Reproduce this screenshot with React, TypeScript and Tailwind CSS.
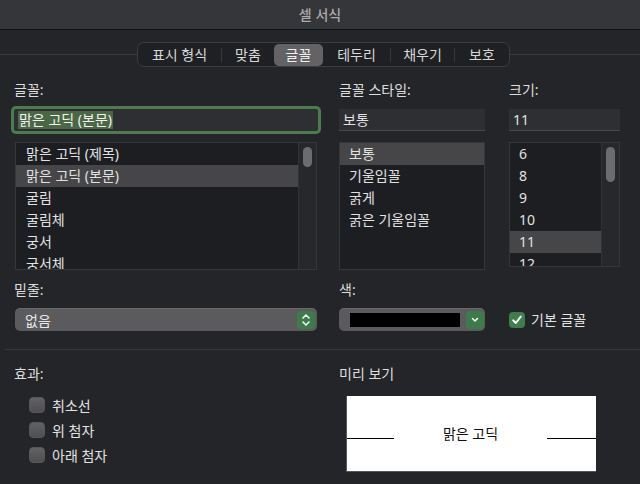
import React from "react";

const FONT = { fontFamily: '"Noto Sans", "Noto Sans CJK KR", Inter, sans-serif' };

const tabs = ["표시 형식", "맞춤", "글꼴", "테두리", "채우기", "보호"];
const tabWidths = ["w-[83px]", "w-[52px]", "w-[49px]", "w-[67px]", "w-[63px]", "w-[54px]"];
const SELECTED_TAB = 2;

const fonts = ["맑은 고딕 (제목)", "맑은 고딕 (본문)", "굴림", "굴림체", "궁서", "궁서체"];
const styles = ["보통", "기울임꼴", "굵게", "굵은 기울임꼴"];
const sizes = ["6", "8", "9", "10", "11", "12"];

const Label = ({ children }: { children: React.ReactNode }) => (
  <div className="h-[16px] leading-[16px] text-[14px] text-[#dedede]">{children}</div>
);

const Scrollbar = ({ thumb }: { thumb: string }) => (
  <div className="w-[18px] shrink-0 bg-[#27282b] border-l border-[#323336] flex justify-center pt-[4px]">
    <div className={`w-[9px] rounded-full bg-[#6c6c6f] ${thumb}`} />
  </div>
);

const Row = ({ text, selected, pad }: { text: string; selected?: boolean; pad: string }) => (
  <div
    className={`h-[22px] shrink-0 leading-[22px] text-[14px] text-[#e2e2e2] whitespace-nowrap ${pad} ${
      selected ? "bg-[#464649]" : ""
    }`}
  >
    {text}
  </div>
);

const Checkbox = ({ checked }: { checked?: boolean }) =>
  checked ? (
    <div className="w-[16px] h-[16px] shrink-0 rounded-[4px] bg-[#3f7d4d] flex items-center justify-center">
      <svg width="12" height="12" viewBox="0 0 12 12" fill="none">
        <path d="M2.2 6.4 L4.8 9 L9.8 2.6" stroke="#fff" strokeWidth="2" strokeLinecap="round" strokeLinejoin="round" />
      </svg>
    </div>
  ) : (
    <div className="w-[16px] h-[16px] shrink-0 rounded-[4px] bg-gradient-to-b from-[#626265] to-[#4f4f52] border border-[#58585b]" />
  );

export default function App() {
  return (
    <div className="w-[640px] h-[484px] bg-[#242529] overflow-hidden flex flex-col" style={FONT}>
      {/* title bar */}
      <div className="h-[30px] shrink-0 bg-[#353639] border-b border-[#111214] flex items-center justify-center text-[14px] font-medium text-[#ababab]">
        셀 서식
      </div>

      {/* tabs */}
      <div className="mt-[12px] flex items-center">
        <div className="grow basis-[7px] h-px bg-[#3a3b3e]" />
        <div className="h-[25px] flex items-center rounded-[7px] border border-[#3c3d41] bg-[#1f2024]">
          {tabs.map((t, i) => (
            <React.Fragment key={t}>
              {i > 0 && i !== SELECTED_TAB && i !== SELECTED_TAB + 1 && (
                <div className="w-px h-[14px] bg-[#38393c]" />
              )}
              <div
                className={`${tabWidths[i]} h-[22px] flex items-center justify-center text-[14px] ${
                  i === SELECTED_TAB ? "bg-[#636366] rounded-[5px] text-[#f0f0f0]" : "text-[#d8d8d8]"
                }`}
              >
                {t}
              </div>
            </React.Fragment>
          ))}
        </div>
        <div className="grow basis-0 h-px bg-[#3a3b3e]" />
      </div>

      <div className="px-[14px]">
        {/* font / style / size */}
        <div className="mt-[15px] grid grid-cols-[304px_146px_114px] gap-x-[21px]">
          <div className="flex flex-col">
            <Label>글꼴:</Label>
            <div className="mt-[11px] h-[22px] bg-[#2e2f33] ring-[3px] ring-[#4c7b4e] rounded-[2px] flex items-center pl-[4px]">
              <span className="bg-[#4b6746] text-[14px] leading-[18px] text-[#f2f2f2] px-[1px]">맑은 고딕 (본문)</span>
            </div>
            <div className="mt-[11px] ml-px w-[302px] h-[128px] border border-[#36373a] bg-[#1d1e22] flex overflow-hidden">
              <div className="flex-1 flex flex-col overflow-hidden">
                {fonts.map((f, i) => (
                  <Row key={f} text={f} selected={i === 1} pad="pl-[10px]" />
                ))}
              </div>
              <Scrollbar thumb="h-[20px]" />
            </div>
          </div>

          <div className="flex flex-col">
            <Label>글꼴 스타일:</Label>
            <div className="mt-[11px] h-[22px] bg-[#2e2f33] border-b border-[#47484b] flex items-center pl-[4px] text-[14px] text-[#e2e2e2]">
              보통
            </div>
            <div className="mt-[11px] h-[128px] border border-[#36373a] bg-[#1d1e22] flex flex-col overflow-hidden">
              {styles.map((s, i) => (
                <Row key={s} text={s} selected={i === 0} pad="pl-[9px]" />
              ))}
            </div>
          </div>

          <div className="flex flex-col ml-[3px]">
            <Label>크기:</Label>
            <div className="mt-[11px] h-[22px] bg-[#2e2f33] border-b border-[#47484b] flex items-center pl-[4px] text-[14px] text-[#e2e2e2]">
              11
            </div>
            <div className="mt-[11px] h-[125px] border border-[#36373a] bg-[#1d1e22] flex overflow-hidden">
              <div className="flex-1 flex flex-col overflow-hidden">
                {sizes.map((s) => (
                  <Row key={s} text={s} selected={s === "11"} pad="pl-[9px]" />
                ))}
              </div>
              <Scrollbar thumb="h-[35px]" />
            </div>
          </div>
        </div>

        {/* underline / color / default font */}
        <div className="mt-[12px] grid grid-cols-[304px_146px_114px] gap-x-[21px]">
          <div className="flex flex-col">
            <Label>밑줄:</Label>
            <div className="mt-[10px] ml-px w-[302px] h-[23px] rounded-[5px] bg-[#5b5b5e] border-t border-[#69696c] flex items-center justify-between pl-[10px] pr-[2px] text-[14px] text-[#e8e8e8]">
              <span>없음</span>
              <div className="w-[18px] h-[18px] rounded-[4px] bg-[#3e7b4c] flex items-center justify-center">
                <svg width="10" height="14" viewBox="0 0 10 14" fill="none">
                  <path d="M2 5 L5 2 L8 5" stroke="#fff" strokeWidth="1.5" strokeLinecap="round" strokeLinejoin="round" />
                  <path d="M2 9 L5 12 L8 9" stroke="#fff" strokeWidth="1.5" strokeLinecap="round" strokeLinejoin="round" />
                </svg>
              </div>
            </div>
          </div>

          <div className="flex flex-col">
            <Label>색:</Label>
            <div className="mt-[10px] h-[23px] rounded-[5px] bg-[#5b5b5e] border-t border-[#69696c] flex items-center pl-[11px] pr-[1px] gap-[6px]">
              <div className="w-[110px] h-[14px] bg-black" />
              <div className="w-[18px] h-[18px] rounded-[4px] bg-[#3e7b4c] flex items-center justify-center">
                <svg width="10" height="8" viewBox="0 0 10 8" fill="none">
                  <path d="M2.5 2.5 L5 5 L7.5 2.5" stroke="#fff" strokeWidth="1.5" strokeLinecap="round" strokeLinejoin="round" />
                </svg>
              </div>
            </div>
          </div>

          <div className="flex flex-col ml-[3px]">
            <div className="h-[16px]" />
            <div className="mt-[11px] flex items-center gap-[6px] text-[14px] text-[#e2e2e2]">
              <Checkbox checked />
              <span>기본 글꼴</span>
            </div>
          </div>
        </div>
      </div>

      <div className="mt-[18px] ml-[5px] h-px shrink-0 bg-[#36373a]" />

      {/* effects / preview */}
      <div className="px-[14px] mt-[16px] grid grid-cols-[304px_250px] gap-x-[21px]">
        <div className="flex flex-col">
          <Label>효과:</Label>
          <div className="mt-[15px] ml-[15px] flex flex-col gap-[9px]">
            {["취소선", "위 첨자", "아래 첨자"].map((e) => (
              <div key={e} className="h-[16px] flex items-center gap-[7px] text-[14px] text-[#e2e2e2]">
                <Checkbox />
                <span>{e}</span>
              </div>
            ))}
          </div>
        </div>

        <div className="flex flex-col">
          <Label>미리 보기</Label>
          <div className="mt-[14px] ml-[7px] w-[250px] h-[76px] bg-white border-l border-b border-[#56575a] flex items-center">
            <div className="w-[47px] h-px bg-black mt-[10px]" />
            <div className="flex-1 text-center text-[14px] text-[#111]">맑은 고딕</div>
            <div className="w-[49px] h-px bg-black mt-[10px]" />
          </div>
        </div>
      </div>
    </div>
  );
}
